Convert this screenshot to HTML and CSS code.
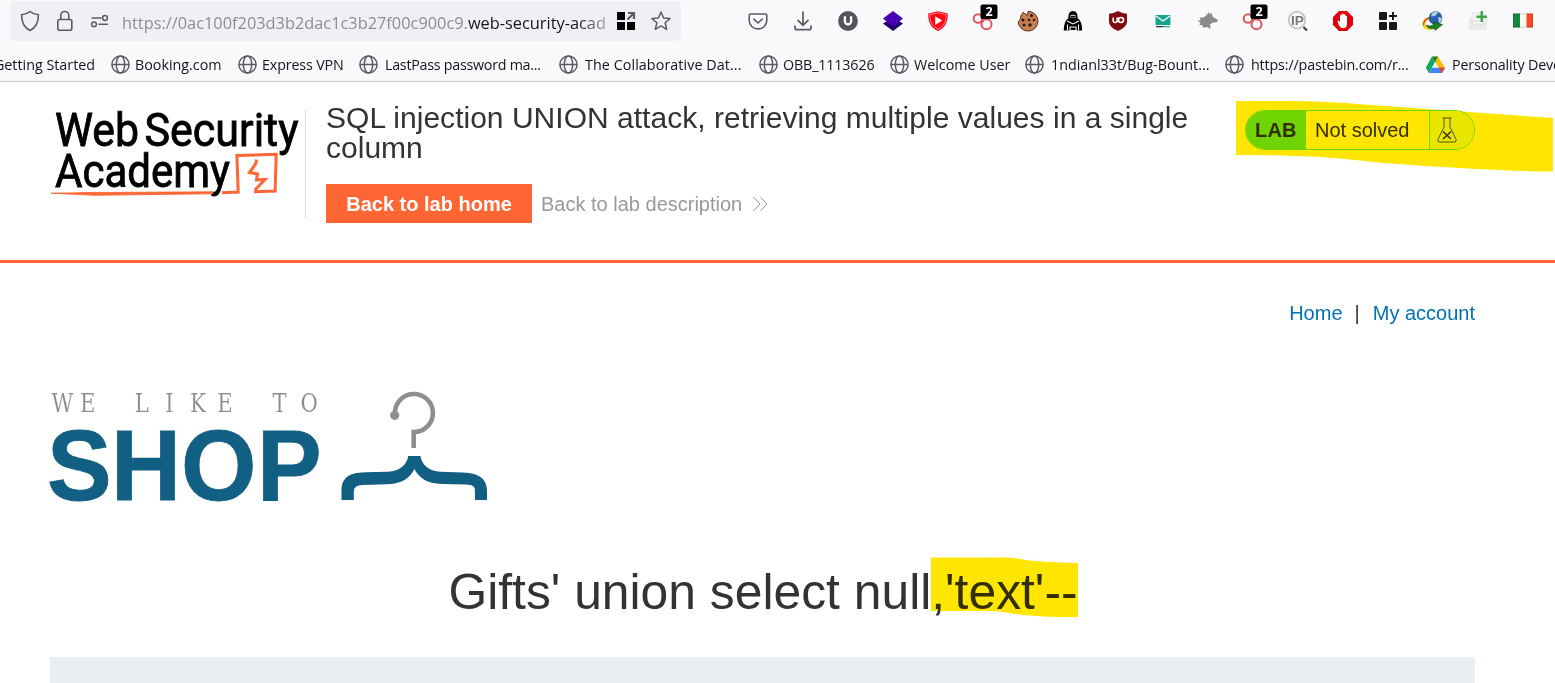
FILE: index.html
```html
<!DOCTYPE html>
<html lang="en">
<head>
<meta charset="utf-8">
<title>SQL injection UNION attack, retrieving multiple values in a single column</title>
<link rel="stylesheet" href="styles.css">
</head>
<body>
<svg width="0" height="0" class="defs">
  <defs>
    <symbol id="globe" viewBox="0 0 20 20"><g fill="none" stroke="#5b5b66" stroke-width="1.5"><circle cx="9.500" cy="9.500" r="8.6"/><ellipse cx="9.500" cy="9.500" rx="4.200" ry="8.6"/><path d="M1 9.500h17"/></g></symbol>
    <symbol id="chain" viewBox="0 0 30 36"><g fill="#fff8f8" stroke="#d9595c" stroke-width="2"><circle cx="7" cy="18.500" r="4.300"/><circle cx="15.500" cy="24.300" r="5"/><path d="M11 21l1.500 1M14.500 16v3"/></g><rect x="9.500" y="4.500" width="17" height="14.500" rx="2" fill="#000"/><text x="18" y="16.300" text-anchor="middle" font-family="Open Sans, sans-serif" font-weight="700" font-size="12.500" fill="#fff">2</text></symbol>
  </defs>
</svg>
<header class="browser">
  <div class="toolbar">
    <div class="urlbar">
      <svg class="u-shield" width="20" height="22" viewBox="0 0 20 22" fill="none" stroke="#5b5b66" stroke-width="1.6" stroke-linejoin="round"><path d="M10 1.500C7.500 3.700 4.500 4.500 1.600 4.700 1.500 11.500 4 17.500 10 20.500 16 17.500 18.500 11.500 18.400 4.700 15.500 4.500 12.500 3.700 10 1.500z"/></svg>
      <svg class="u-lock" width="18" height="22" viewBox="0 0 18 22" fill="none" stroke="#5b5b66" stroke-width="1.6"><rect x="1.800" y="9.500" width="14" height="10.700" rx="2"/><path d="M4.800 9.500V5.500a4 4 0 0 1 8 0v4"/></svg>
      <svg class="u-perm" width="20" height="14" viewBox="0 0 20 14" fill="none" stroke="#5b5b66" stroke-width="1.500"><path d="M1.500 4h10M8.500 10.300h9.500"/><circle cx="15" cy="4" r="2.400"/><circle cx="4" cy="10.300" r="2.400"/></svg>
      <div class="url"><span>https://0ac100f203d3b2dac1c3b27f00c900c9.</span><b>web-security-acad</b></div>
      <svg class="u-grid" width="20" height="20" viewBox="0 0 20 20"><path d="M1 1h8v8H1zM1 11h8v8H1zM11 11h8v8h-8z"/><path d="M12 2h6v6M18 2l-6.500 6.500" fill="none" stroke="#5b5b66" stroke-width="2.200"/></svg>
      <svg class="u-star" width="22" height="22" viewBox="0 0 22 22" fill="none" stroke="#5b5b66" stroke-width="1.500" stroke-linejoin="round"><path d="M11 2l2.600 6 6.400.6-4.900 4.200 1.600 6.500L11 15.900l-5.700 3.400 1.600-6.500L2 8.600l6.400-.6z"/></svg>
    </div>
    <div class="extensions">
      <svg viewBox="0 0 22 22" fill="none" stroke="#5b5b66" stroke-width="1.600" stroke-linecap="round" stroke-linejoin="round"><path d="M3.800 4h14.400q1.600 0 1.600 1.600v5a8.800 8.300 0 0 1-17.600 0v-5Q2.200 4 3.800 4z"/><path d="M6.800 9.200l4.200 3.800 4.200-3.800"/></svg>
      <svg viewBox="0 0 22 22" fill="none" stroke="#5b5b66" stroke-width="1.700" stroke-linecap="round"><path d="M11 2v13M6 10.300l5 5 5-5M3 16v1.700q0 2 2 2h12q2 0 2-2V16"/></svg>
      <svg viewBox="0 0 22 22"><circle cx="11" cy="11" r="9.900" fill="#54545d"/><path d="M7.900 6.200v5.100a3.100 3.100 0 0 0 6.200 0V6.200" fill="none" stroke="#fff" stroke-width="2.300"/></svg>
      <svg viewBox="0 0 22 22"><path d="M1 13.500l4-2.500h12l4 2.500-10 7.500z" fill="#22006f"/><path d="M11 1l10 7.500L11 16.500 1 8.500z" fill="#4a00b4"/></svg>
      <svg viewBox="0 0 22 22"><path d="M11 1.200l9.700 2.200c.7 8-3 14.800-9.700 17.600C4.300 18.200.6 11.400 1.300 3.400z" fill="#fa0712"/><path d="M11 2.800l8.200 1.900c.2 6.500-2.500 11.800-8.200 14.400C5.300 16.500 2.600 11.200 2.800 4.700z" fill="none" stroke="#ffb5b5" stroke-width=".7"/><path d="M8.200 6.200l7 4.300-7 4.400z" fill="#fff"/></svg>
      <svg class="chain"><use href="#chain"/></svg>
      <svg viewBox="0 0 22 22"><path d="M6 2.400l4.400 2.900.7-4A9.900 9.900 0 1 1 1.200 12l2.300-3 .3-3z" fill="#c77e4e" stroke="#593321"/><g fill="#2e1710"><circle cx="14.500" cy="5.400" r="1.500"/><circle cx="6" cy="10" r="1.600"/><circle cx="12" cy="10" r="1.300"/><circle cx="17" cy="10" r="1.300"/><circle cx="7" cy="15" r="1.500"/><circle cx="13" cy="15" r="1.700"/></g></svg>
      <svg viewBox="0 0 22 22"><path d="M11 1c-3.500 0-4.700 3-4.700 7.500C3.500 9.800 2 14 1.800 20.500h18.400C20 14 18.500 9.800 15.700 8.500 15.700 4 14.500 1 11 1z"/><path d="M8 5.500q3-1.500 6 0v2H8z" fill="#ddd"/><path d="M8.500 6.500h5" stroke="#000" stroke-width="1.200"/><path d="M5 11l6 3 6-3M5.500 20.500v-6M16.500 20.500v-6M8 17h6v3.500H8z" fill="none" stroke="#fff" stroke-width="1.100"/></svg>
      <svg viewBox="0 0 22 22"><path d="M11 1q4.500 2.600 9 2.800v7.500c0 4.800-4 7.500-9 9.700-5-2.200-9-4.900-9-9.700V3.800Q6.500 3.600 11 1z" fill="#7f0c10"/><path d="M6.200 7.500v3q0 2 2 2t2-2v-3" fill="none" stroke="#fff" stroke-width="1.600"/><circle cx="14" cy="10" r="2.500" fill="none" stroke="#fff" stroke-width="1.600"/></svg>
      <svg viewBox="0 0 22 22"><path d="M1 2h20v19H1z" fill="#fff"/><path d="M3.500 5h15v10h-15z" fill="#13a68c"/><path d="M4 6l7 5 7-5" fill="none" stroke="#fff" stroke-width="1.300"/><path d="M4 16.700h7" stroke="#222" stroke-width="1.200"/><path d="M11 16.700h7" stroke="#13a68c" stroke-width="1.200"/></svg>
      <svg viewBox="0 0 22 22" fill="#8b8b8b"><path d="M10 4.500l1.800-2.200 1.300 2 1.600-1.800.8 4.300 5.500 3.200-.8 2-4.700.8-2.500 1.700.5 4.500-3.500-2-3.500.8L5 15.200l-2.700-.5 1.300-2-3-1.700 2.800-1-.8-2.500h4z"/></svg>
      <svg class="chain"><use href="#chain"/></svg>
      <svg viewBox="0 0 22 22"><circle cx="10" cy="10" r="8.300" fill="#fafafa" stroke="#bbc4c8" stroke-width="1.700"/><path d="M16.500 17l3.500 3.500" stroke="#444" stroke-width="2.200"/><text x="10.500" y="14.500" text-anchor="middle" font-family="Liberation Sans" font-weight="700" font-size="13" textLength="13" lengthAdjust="spacingAndGlyphs" fill="#777">IP</text></svg>
      <svg viewBox="0 0 22 22"><path d="M7 1h8l6 6v8l-6 6H7l-6-6V7z" fill="#e3000b"/><path d="M5.500 11q.7-1.200 1.800.2L8 12V6q0-1 .8-1t.8 1V4.500q0-1 .9-1t.9 1V5q0-1 .9-1t.9 1v1.500q0-1 .9-1t.9 1v7.500q-.2 4.300-3.800 4.300-3 0-4.300-3z" fill="#fff"/></svg>
      <svg viewBox="0 0 22 22" fill="#19191c"><rect x="2" y="2" width="8" height="8" rx="1"/><rect x="2" y="12" width="8" height="8" rx="1"/><rect x="12" y="12" width="8" height="8" rx="1"/><path d="M15 2h2v3h3v2h-3v3h-2V7h-3V5h3z"/></svg>
      <svg viewBox="0 0 22 22"><ellipse cx="8.500" cy="13" rx="7" ry="5" transform="rotate(-20 8.500 13)" fill="none" stroke="#f0cf22" stroke-width="3"/><path d="M1.500 15Q1.800 9 7 8" fill="none" stroke="#e04a28" stroke-width="1.300"/><circle cx="13.500" cy="8" r="6.800" fill="#2a5fae"/><path d="M10 3q4-2.500 6 0l-3 3-4 .5zM16 7l4 1q0 3-3 5z" fill="#a9d3dd"/><path d="M4 15q5 2.500 8-1v-2l8.500 2.500-7.500 6v-2q-6 1.500-9-3.500z" fill="#168319" stroke="#093b0c" stroke-width=".5"/></svg>
      <svg viewBox="0 0 22 22"><path d="M2 9l3-2 15 1v12H2z" fill="#e9e9ec"/><path d="M2 12q9 6 18 0M5 3h10v8H5z" fill="#f2f2f3" stroke="#ddd" stroke-width=".7"/><path d="M13.500 1h2.500v4.500h4V8h-4v4h-2.500V8h-4V5.500h4z" fill="#3fa846"/></svg>
      <svg viewBox="0 0 22 22"><path d="M1 3.500h7v14H1z" fill="#15883e"/><path d="M8 3.500h6.500v14H8z" fill="#f7f7f5"/><path d="M14.500 3.500H21v14h-6.500z" fill="#f34b22"/><path d="M1.400 3.900h19.200v13.200H1.400z" fill="none" stroke="#000" stroke-opacity=".15"/></svg>
    </div>
  </div>
  <nav class="bookmarks">
    <a class="clip"><span>Getting Started</span></a>
    <a><svg><use href="#globe"/></svg><span>Booking.com</span></a>
    <a class="snug"><svg><use href="#globe"/></svg><span>Express VPN</span></a>
    <a class="gap tight"><svg><use href="#globe"/></svg><span>LastPass password ma...</span></a>
    <a class="gap loose"><svg><use href="#globe"/></svg><span>The Collaborative Dat...</span></a>
    <a class="snug"><svg><use href="#globe"/></svg><span>OBB_1113626</span></a>
    <a><svg><use href="#globe"/></svg><span>Welcome User</span></a>
    <a class="gap"><svg><use href="#globe"/></svg><span>1ndianl33t/Bug-Bount...</span></a>
    <a class="gap snug"><svg><use href="#globe"/></svg><span>https://pastebin.com/r...</span></a>
    <a class="gap drive"><svg viewBox="0 0 20 20"><path d="M7 1.500h6l7 11.500h-6.200z" fill="#ffba00"/><path d="M7 1.500L.8 12.700l3 5.300L10 7z" fill="#0da960"/><path d="M6.800 12.800H20l-3 5.200H3.800z" fill="#4285f4"/><path d="M13.700 12.800H20l-3 5.200z" fill="#ea4335"/><path d="M7 1.500h6L10 7z" fill="#188038"/></svg><span>Personality Development</span></a>
  </nav>
</header>
<section class="lab-header">
  <svg class="academy" width="255" height="108" viewBox="50 110 255 108">
    <g font-family="Roboto, sans-serif" font-size="47" fill="#000" stroke="#000" stroke-width=".9">
      <text x="55" y="146.300" textLength="84" lengthAdjust="spacingAndGlyphs">Web</text>
      <text x="144.500" y="146.300" textLength="154" lengthAdjust="spacingAndGlyphs">Security</text>
      <text x="55" y="186.500" textLength="175" lengthAdjust="spacingAndGlyphs">Academy</text>
    </g>
    <g fill="none" stroke="#ff6633">
      <path d="M51 193.200L90 192.500 213 191.800 213 193.800 95 195.300z" fill="#ff6633" stroke-width=".8"/>
      <path d="M222 192.700l16.200-.7-1.300-36.500 39.300-1.200-1.100 36.700L254 191.700" stroke-width="3"/>
      <path d="M256.500 159.500l-.5 4-6.500 9 8 1.500-1 6 8.500-.5-10 10.500" stroke-width="3"/>
    </g>
  </svg>
  <div class="title">
    <h2>SQL injection UNION attack, retrieving multiple values in a single column</h2>
    <div class="actions">
      <a class="button">Back to lab home</a>
      <a class="back">Back to lab description</a>
      <svg width="17" height="16" viewBox="0 0 17 16" fill="none" stroke="#999"><path d="M1.500 1l6.500 7-6.500 7M8.500 1L15 8l-6.500 7"/></svg>
    </div>
  </div>
  <div class="status">
    <b>LAB</b><span>Not solved</span>
    <i><svg width="20" height="26" viewBox="0 0 20 26" fill="none" stroke="#333332" stroke-width=".8"><path d="M5.500 1h9M7 1v9L.9 22.500Q.2 25 2.500 25h15q2.300 0 1.600-2.500L13 10V1"/><path d="M6 14.500l8 7.500M14 14.500l-8 7.500" stroke-width="1.400"/></svg></i>
    <svg class="marker" width="319" height="72" viewBox="0 0 319 72"><path d="M1 1H58Q90 1 130 4.500Q220 11 318 18V71.500H300Q180 67 110 59Q70 55 1 55z" fill="#ffe600"/></svg>
  </div>
</section>
<main>
  <nav class="account"><a>Home</a><span>|</span><a>My account</a></nav>
  <svg class="shop" width="440" height="120" viewBox="50 388 440 120">
    <text transform="translate(0 412) scale(.8 1)" x="64.500 100 120 168.500 206.500 237.500 271.500 300 340.500 375.500" y="0" font-family="DejaVu Serif, serif" font-size="26.500" fill="#8b8b8b" stroke="#fff" stroke-width=".15">WE LIKE TO</text>
    <text transform="translate(0 500) scale(.97 1)" x="48.500 114.500 186.500 265" y="0" font-family="Liberation Sans, sans-serif" font-weight="700" font-size="100" fill="#125f84" stroke="#125f84" stroke-width=".8">SHOP</text>
    <path d="M395 414.500a19 19 0 1 1 18.700 17.500v16" fill="none" stroke="#8e8e8f" stroke-width="4.600"/><circle cx="394.700" cy="415.300" r="4.600" fill="#8e8e8f"/>
    <path d="M408.200 456h12.300c1 8 8 15.500 20 15.800l22 .6c18 .3 24.500 8 24.500 18V500h-12v-9c0-5-3-6.300-9-6.500l-24-.6c-15-.4-23-6-27.600-15-4.600 9-12.600 15-27.600 15.400l-24 .6c-6 .2-9 2-9 7V500h-12.300v-9.300c0-12 6.500-18 23.500-18.400l23-.6c12-.3 19.200-7.700 20.200-15.700z" fill="#125f84"/>
  </svg>
  <h1>Gifts' union select null<span>,'text'--<svg class="marker2" width="147" height="60" viewBox="0 0 147 60"><path d="M0 .5H75Q84 .8 95 3q14 2 52 3v54h-18Q100 59.500 78 56 70 54 60 54H0z" fill="#ffe600"/></svg></span></h1>
  <div class="panel"></div>
</main>
</body>
</html>
```
FILE: styles.css
```css
* { box-sizing: border-box; }
body { margin: 0; height: 683px; overflow: hidden; background: #fff; color: #333332; font-family: "Liberation Sans", Arial, sans-serif; }
svg { flex: none; display: block; }
.defs { position: absolute; }

.browser { height: 82px; overflow: hidden; background: #f9f9fb; border-bottom: 1px solid #ccc; font-family: "Open Sans", "Noto Sans", sans-serif; }
.toolbar { display: flex; height: 48px; padding-left: 10px; }
.urlbar { display: flex; align-items: center; width: 671px; height: 40px; margin-top: 1px; padding-left: 10px; border-radius: 5px; background: #f0f0f4; }
.u-lock { margin-left: 16px; }
.u-perm { margin-left: 16px; }
.url { width: 485px; margin-left: 12px; margin-top: 4px; overflow: hidden; white-space: nowrap; font-size: 16.35px; line-height: 26px; color: #8c8c93; -webkit-mask-image: linear-gradient(90deg, #000 455px, rgba(0,0,0,.3) 485px); mask-image: linear-gradient(90deg, #000 455px, rgba(0,0,0,.3) 485px); }
.url b { font-weight: 400; color: #15141a; }
.u-grid { margin-left: 9px; }
.u-star { margin-left: 14px; }
.extensions { display: flex; gap: 23px; margin-left: 66px; padding-top: 10px; }
.extensions svg { width: 22px; height: 22px; }
.extensions .chain { width: 30px; height: 36px; margin: -10px -7px 0 -1px; }

.bookmarks { display: grid; grid-template-columns: 111px 127px 121px 200px 200px 131px 135px 200px 200px 200px; height: 33px; align-items: center; font-size: 14.3px; color: #15141a; white-space: nowrap; }
.bookmarks a { display: flex; align-items: center; gap: 4px; }
.bookmarks .gap { gap: 6px; }
.bookmarks .drive { gap: 7px; letter-spacing: -.15px; }
.bookmarks .snug { letter-spacing: -.15px; }
.bookmarks .tight { letter-spacing: -.27px; }
.bookmarks .loose { letter-spacing: .08px; }
.bookmarks svg { width: 20px; height: 20px; }
.bookmarks .clip { justify-content: flex-end; padding-right: 16px; }

.lab-header { display: flex; height: 181px; padding: 28px 80px 0 50px; border-bottom: 3px solid #ff6633; }
.academy { width: 255px; overflow: visible; }
.title { width: 900px; height: 108px; padding-left: 20px; border-left: 1px solid #ddd; }
.title h2 { width: 880px; margin: -7px 0 0; font-size: 30px; line-height: 30px; font-weight: 400; letter-spacing: .02px; }
.actions { display: flex; align-items: center; height: 39px; margin-top: 21px; font-size: 20px; color: #999; }
.button { width: 206px; line-height: 37px; padding-top: 2px; text-align: center; font-weight: 700; color: #fff; background: #ff6633; }
.back { margin-left: 9px; padding-top: 2px; white-space: nowrap; }
.actions svg { margin-left: 10px; }
.status { position: relative; display: flex; width: 230px; height: 40px; margin-left: auto; border: 1px solid #70eb00; border-radius: 20px; font-size: 20px; line-height: 38px; }
.status b { width: 60px; padding-left: 9px; border-radius: 19px 0 0 19px; background: #70eb00; letter-spacing: .2px; }
.status span { width: 124px; padding-left: 9px; border-right: 1px solid #70eb00; }
.status i { flex: 1; padding: 6px 0 0 7px; border-radius: 0 19px 19px 0; background: #e8ffde; }
.marker { position: absolute; left: -11px; top: -11px; mix-blend-mode: multiply; }

main { padding: 0 80px 0 50px; }
.account { display: flex; justify-content: flex-end; height: 100px; padding-top: 38px; font-size: 20px; line-height: 24px; color: #0071b1; }
.account span { margin: 0 13px 0 12px; color: #333332; }
.shop { margin-top: 25px; overflow: visible; }
h1 { margin: 49px 0 0; height: 100px; padding: 7px 0 0 1px; text-align: center; font-size: 49.8px; line-height: 56px; font-weight: 400; white-space: nowrap; }
h1 span { position: relative; }
.marker2 { position: absolute; left: 0; top: -7px; mix-blend-mode: multiply; }
.panel { height: 26px; background: #eaeff2; }
```
